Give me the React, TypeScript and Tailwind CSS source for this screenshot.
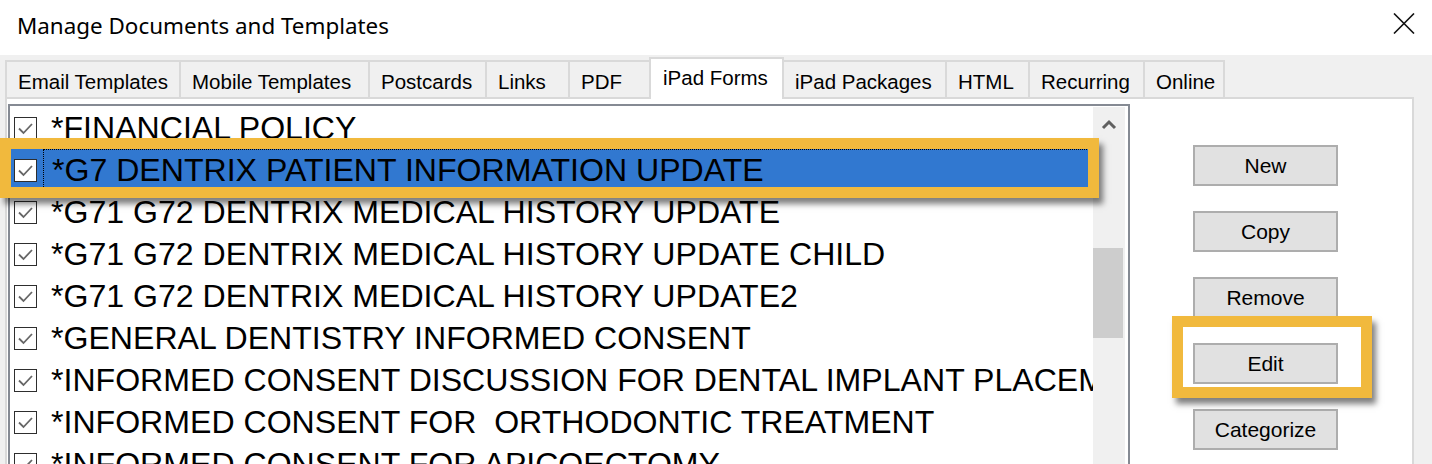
import React from "react";

const tabs = [
  { label: "Email Templates", w: "w-[176px]" },
  { label: "Mobile Templates", w: "w-[191px]" },
  { label: "Postcards", w: "w-[119px]" },
  { label: "Links", w: "w-[85px]" },
  { label: "PDF", w: "w-[83px]" },
  { label: "iPad Forms", w: "w-[135px]", active: true },
  { label: "iPad Packages", w: "w-[165px]" },
  { label: "HTML", w: "w-[85px]" },
  { label: "Recurring", w: "w-[117px]" },
  { label: "Online", w: "w-[82px]" },
];

const items = [
  "*FINANCIAL POLICY",
  "*G7 DENTRIX PATIENT INFORMATION UPDATE",
  "*G71 G72 DENTRIX MEDICAL HISTORY UPDATE",
  "*G71 G72 DENTRIX MEDICAL HISTORY UPDATE CHILD",
  "*G71 G72 DENTRIX MEDICAL HISTORY UPDATE2",
  "*GENERAL DENTISTRY INFORMED CONSENT",
  "*INFORMED CONSENT DISCUSSION FOR DENTAL IMPLANT PLACEMENT",
  "*INFORMED CONSENT FOR  ORTHODONTIC TREATMENT",
  "*INFORMED CONSENT FOR APICOECTOMY",
];

const buttons = ["New", "Copy", "Remove", "Edit", "Categorize"];

function Check() {
  return (
    <div className="w-[23px] h-[23px] shrink-0 border-[1.5px] border-[#2e2e2e] bg-white flex items-center justify-center">
      <svg width="19" height="19" viewBox="0 0 19 19">
        <polyline points="3,9.5 7.5,14 16,5" fill="none" stroke="#666666" strokeWidth="1.8" />
      </svg>
    </div>
  );
}

export default function App() {
  return (
    <div className="relative w-[1432px] h-[464px] overflow-hidden bg-[#f0f0f0] font-['Liberation_Sans',Arial,sans-serif] text-black">
      {/* Title bar */}
      <div className="h-[55px] bg-white flex items-center justify-between pl-[17px] pr-[17px]">
        <span className="font-['Noto_Sans',sans-serif] text-[22.4px] leading-none -mt-[3px]">
          Manage Documents and Templates
        </span>
        <svg width="22" height="21" viewBox="0 0 22 21" className="-mt-[8px]">
          <path d="M1 0.5 L21 20.5 M21 0.5 L1 20.5" stroke="#111" strokeWidth="1.6" />
        </svg>
      </div>

      <div className="pl-[5px] pr-[18px]">
        {/* Tabs */}
        <div className="flex items-end h-[42px]">
          {tabs.map((t, i) =>
            t.active ? (
              <div
                key={t.label}
                className={`${t.w} relative z-10 -ml-[2px] -mb-[2px] h-[42px] bg-white border-2 border-b-0 border-[#d9d9d9] pl-[12px] pt-[9px] text-[20.5px] leading-none whitespace-nowrap`}
              >
                {t.label}
              </div>
            ) : (
              <div
                key={t.label}
                className={`${t.w} ${i === 0 ? "" : "-ml-[2px]"} h-[37px] bg-[#f0f0f0] border-2 border-b-0 border-[#d9d9d9] pl-[11px] pt-[10px] text-[20.5px] leading-none whitespace-nowrap`}
              >
                {t.label}
              </div>
            )
          )}
        </div>

        {/* Panel */}
        <div className="h-[380px] bg-white border-2 border-[#d9d9d9] flex pl-px pt-[5px]">
          {/* List box */}
          <div className="w-[1122px] h-[400px] border-2 border-[#858a93] p-px flex">
            <div className="flex-1 overflow-hidden">
              {items.map((it, i) => {
                const sel = i === 1;
                return (
                  <div
                    key={it}
                    className={`h-[42px] flex items-center pl-[3px] ${sel ? "bg-[#3178d0]" : ""}`}
                  >
                    <Check />
                    <div
                      className={`flex-1 h-full flex items-center ml-[6px] pl-[8px] ${
                        sel ? "border border-dotted border-black" : ""
                      }`}
                    >
                      <span className="text-[32.1px] leading-[42px] whitespace-pre">{it}</span>
                    </div>
                  </div>
                );
              })}
            </div>
            {/* Scrollbar */}
            <div className="w-[32px] mr-[2px] bg-[#f0f0f0] flex flex-col">
              <div className="h-[34px] flex items-center justify-center">
                <svg width="16" height="12" viewBox="0 0 16 12">
                  <polyline points="2,10 8,4 14,10" fill="none" stroke="#606060" strokeWidth="3" />
                </svg>
              </div>
              <div className="mt-[107px] w-[30px] h-[90px] bg-[#cdcdcd]" />
            </div>
          </div>

          {/* Buttons */}
          <div className="flex flex-col gap-[25px] pt-[41px] pl-[63px]">
            {buttons.map((b) => (
              <div
                key={b}
                className="w-[145px] h-[41px] bg-[#e1e1e1] border-2 border-[#adadad] flex items-center justify-center text-[21px] leading-none"
              >
                {b}
              </div>
            ))}
          </div>
        </div>
      </div>

      {/* Callout highlights */}
      <div className="absolute left-0 top-[138px] w-[1099px] h-[60px] border-[11px] border-[#f1b93d] shadow-[4px_6px_6px_rgba(0,0,0,0.5)]" />
      <div className="absolute left-[1172px] top-[316px] w-[200px] h-[82px] border-[11px] border-[#f1b93d] shadow-[4px_6px_6px_rgba(0,0,0,0.5)]" />
    </div>
  );
}
